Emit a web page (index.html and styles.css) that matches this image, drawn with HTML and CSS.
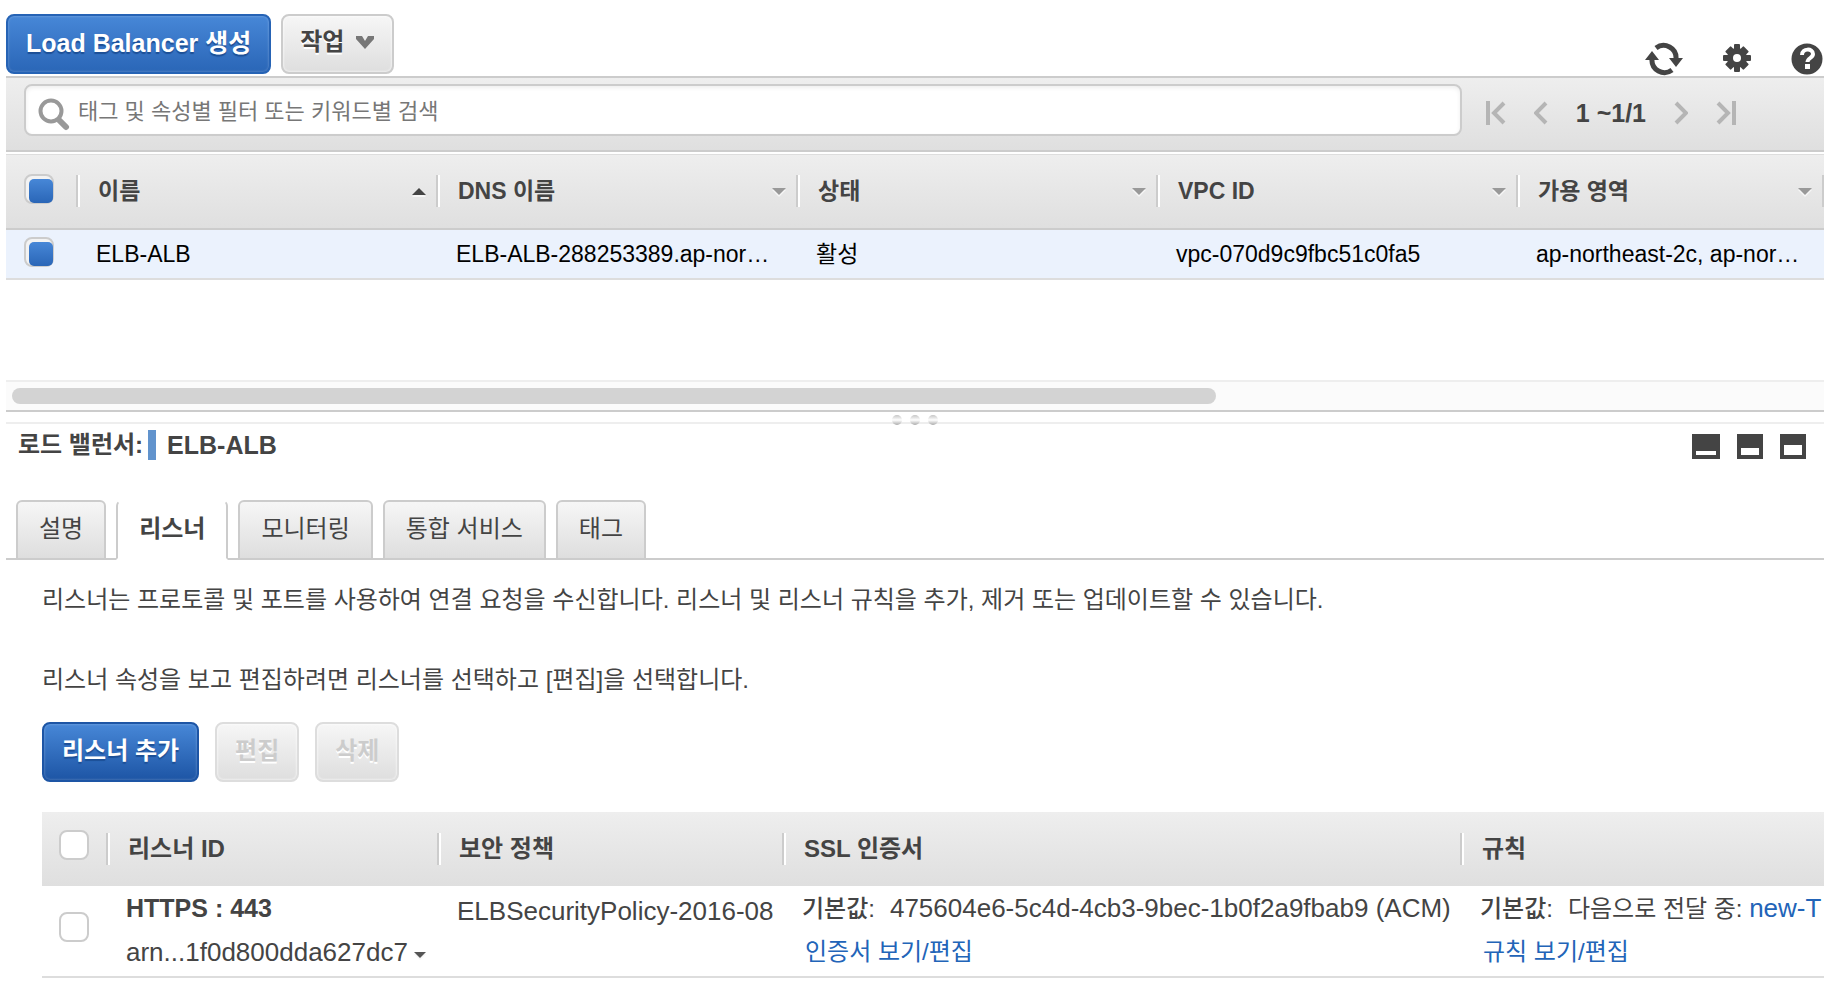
FILE: index.html
```html
<!DOCTYPE html>
<html lang="ko">
<head>
    <meta charset="UTF-8">
    <meta name="viewport" content="width=device-width, initial-scale=1.0">
    <title>Load Balancer</title>
    <link rel="stylesheet" href="styles.css">
</head>
<body>

    <header class="actions">
        <button class="btn btn-primary">Load Balancer 생성</button>
        <button class="btn btn-menu">작업
            <svg width="18" height="14" viewBox="0 0 18 14"><path d="M0 1h6l3 5 3-5h6v3L9 14 0 4z" fill="#777"/></svg>
        </button>
        <div class="tools">
            <button class="icon-btn" aria-label="새로 고침">
                <svg width="38" height="34" viewBox="0 0 38 34">
                    <g fill="none" stroke="#444" stroke-width="5">
                        <path d="M11 6A12.500 12.500 0 0 1 31 17"/>
                        <path d="M27 28A12.500 12.500 0 0 1 7 17"/>
                    </g>
                    <path d="M24 16h14l-7 9zM0 18h14L7 9z" fill="#444"/>
                </svg>
            </button>
            <button class="icon-btn" aria-label="설정">
                <svg width="28" height="34" viewBox="0 0 28 34">
                    <g fill="#444">
                        <rect x="11" y="2" width="6" height="28" rx="1"/>
                        <rect x="0" y="13" width="28" height="6" rx="1"/>
                        <rect x="10" y="3" width="8" height="26" rx="1" transform="rotate(45 14 16)"/>
                        <rect x="10" y="3" width="8" height="26" rx="1" transform="rotate(-45 14 16)"/>
                        <circle cx="14" cy="16" r="10"/>
                    </g>
                    <circle cx="14" cy="16" r="4" fill="#fff"/>
                </svg>
            </button>
            <button class="icon-btn" aria-label="도움말">
                <svg width="32" height="34" viewBox="0 0 32 34">
                    <circle cx="16" cy="17" r="15.500" fill="#444"/>
                    <path d="M11 13c0-7 11-7 11-1 0 4-5.500 4-5.500 8" fill="none" stroke="#fff" stroke-width="4"/>
                    <rect x="14" y="22" width="5" height="5" fill="#fff"/>
                </svg>
            </button>
        </div>
    </header>

    <section class="filter">
        <div class="search">
            <svg width="32" height="34" viewBox="0 0 32 34">
                <path d="M21 23l7 7" stroke="#999" stroke-width="6" stroke-linecap="round"/>
                <circle cx="13" cy="14" r="10.500" fill="none" stroke="#999" stroke-width="4"/>
            </svg>
            <input type="text" class="search-input" aria-label="검색" placeholder="태그 및 속성별 필터 또는 키워드별 검색">
        </div>
        <nav class="pager">
            <button class="icon-btn" aria-label="처음"><svg width="20" height="24" viewBox="0 0 20 24"><path d="M2 0v24M18 2L8 12l10 10" /></svg></button>
            <button class="icon-btn" aria-label="이전"><svg width="14" height="24" viewBox="0 0 14 24"><path d="M12 2L2 12l10 10"/></svg></button>
            <span class="pager-text">1 ~1/1</span>
            <button class="icon-btn" aria-label="다음"><svg width="14" height="24" viewBox="0 0 14 24"><path d="M2 2l10 10L2 22"/></svg></button>
            <button class="icon-btn" aria-label="마지막"><svg width="20" height="24" viewBox="0 0 20 24"><path d="M2 2l10 10L2 22M18 0v24"/></svg></button>
        </nav>
    </section>

    <div class="balancers">
        <table class="grid">
            <colgroup>
                <col class="col-check"><col class="col-wide"><col class="col-wide"><col class="col-wide"><col class="col-wide"><col>
            </colgroup>
            <thead>
                <tr>
                    <th><input type="checkbox" class="check" aria-label="모두 선택" checked></th>
                    <th><div class="head">이름 <i class="arrow arrow-up"></i></div></th>
                    <th><div class="head">DNS 이름 <i class="arrow"></i></div></th>
                    <th><div class="head">상태 <i class="arrow"></i></div></th>
                    <th><div class="head">VPC ID <i class="arrow"></i></div></th>
                    <th><div class="head head-last">가용 영역 <i class="arrow"></i></div></th>
                </tr>
            </thead>
            <tbody>
                <tr>
                    <td><input type="checkbox" class="check" aria-label="ELB-ALB" checked></td>
                    <td>ELB-ALB</td>
                    <td>ELB-ALB-288253389.ap-nor…</td>
                    <td>활성</td>
                    <td>vpc-070d9c9fbc51c0fa5</td>
                    <td>ap-northeast-2c, ap-nor…</td>
                </tr>
            </tbody>
        </table>
    </div>

    <div class="scrollbar"><div class="thumb"></div></div>
    <div class="splitter"><i></i><i></i><i></i></div>

    <section class="detail-head">
        <h2 class="detail-title">로드 밸런서:<span class="mark"></span><span class="detail-name">ELB-ALB</span></h2>
        <div class="panes">
            <button class="icon-btn" aria-label="최소화"><svg width="28" height="25" viewBox="0 0 28 25"><path d="M0 0h28v25H0z" fill="#444"/><path d="M4 17h20v4H4z" fill="#fff"/></svg></button>
            <button class="icon-btn" aria-label="절반"><svg width="26" height="25" viewBox="0 0 26 25"><path d="M0 0h26v25H0z" fill="#444"/><path d="M4 14h18v7H4z" fill="#fff"/></svg></button>
            <button class="icon-btn" aria-label="최대화"><svg width="26" height="25" viewBox="0 0 26 25"><path d="M0 0h26v25H0z" fill="#444"/><path d="M4 11h18v10H4z" fill="#fff"/></svg></button>
        </div>
    </section>

    <nav class="tabs">
        <button class="tab">설명</button>
        <button class="tab active">리스너</button>
        <button class="tab">모니터링</button>
        <button class="tab">통합 서비스</button>
        <button class="tab">태그</button>
    </nav>

    <main class="listeners">
        <p>리스너는 프로토콜 및 포트를 사용하여 연결 요청을 수신합니다. 리스너 및 리스너 규칙을 추가, 제거 또는 업데이트할 수 있습니다.</p>
        <p>리스너 속성을 보고 편집하려면 리스너를 선택하고 [편집]을 선택합니다.</p>
        <div class="listener-actions">
            <button class="btn btn-primary btn-dark">리스너 추가</button>
            <button class="btn" disabled>편집</button>
            <button class="btn" disabled>삭제</button>
        </div>

        <div class="listener-table">
            <table class="grid">
                <colgroup>
                    <col class="col-lcheck"><col class="col-id"><col class="col-policy"><col class="col-cert"><col>
                </colgroup>
                <thead>
                    <tr>
                        <th><input type="checkbox" class="check" aria-label="모두 선택"></th>
                        <th><div class="head">리스너 ID</div></th>
                        <th><div class="head">보안 정책</div></th>
                        <th><div class="head">SSL 인증서</div></th>
                        <th><div class="head">규칙</div></th>
                    </tr>
                </thead>
                <tbody>
                    <tr>
                        <td><input type="checkbox" class="check" aria-label="HTTPS : 443"></td>
                        <td>
                            <div class="line protocol">HTTPS : 443</div>
                            <div class="line"><span class="value">arn...1f0d800dda627dc7</span><i class="arrow arrow-dark"></i></div>
                        </td>
                        <td class="policy"><span class="value">ELBSecurityPolicy-2016-08</span></td>
                        <td>
                            <div class="line"><span class="term">기본값:</span><span class="value">475604e6-5c4d-4cb3-9bec-1b0f2a9fbab9 (ACM)</span></div>
                            <div class="line line-link"><a href="#">인증서 보기/편집</a></div>
                        </td>
                        <td>
                            <div class="line"><span class="term">기본값:</span>다음으로 전달 중: <a href="#" class="value">new-T</a></div>
                            <div class="line line-link"><a href="#">규칙 보기/편집</a></div>
                        </td>
                    </tr>
                </tbody>
            </table>
        </div>
    </main>

</body>
</html>
```

FILE: styles.css
```css
* { box-sizing: border-box; }
body {
    margin: 14px 12px 0 6px;
    font-family: "Liberation Sans", "Noto Sans CJK KR", sans-serif;
    font-size: 24px; line-height: 32px;
    color: #444; background: #fff;
}
button, input { font-family: inherit; font-size: inherit; line-height: inherit; color: inherit; }
a { color: #2264b8; text-decoration: none; }
svg { display: block; }

/* buttons */
.btn {
    height: 60px; padding: 0 18px 2px;
    border: 2px solid #ccc; border-radius: 8px;
    background: linear-gradient(#f6f6f6, #dedede);
    box-shadow: inset 0 0 2px 1px rgba(255, 255, 255, 0.5);
    font-weight: bold; text-shadow: 0 2px 0 #fff;
    cursor: pointer;
}
.btn-primary {
    color: #fff; border-color: #2663b5;
    background: linear-gradient(#4787d7, #2a66b7);
    box-shadow: inset 0 0 2px 1px rgba(255, 255, 255, 0.15);
    text-shadow: 0 2px 1px #1c4f96;
}
.btn-dark { border-color: #1d55a5; background: linear-gradient(#4787d7, #1d55a5); }
.btn-menu { display: flex; align-items: center; gap: 12px; padding: 0 18px 4px 17px; }
.btn:disabled { color: #ccc; border-color: #ddd; cursor: default; }
.icon-btn { padding: 0; border: 0; background: none; cursor: pointer; }

/* top bar */
.actions { display: flex; gap: 10px; height: 62px; align-items: flex-start; }
.actions .btn-primary { font-size: 25px; }
.tools { display: flex; gap: 40px; margin-left: auto; padding-right: 1px; align-self: flex-end; }
.filter {
    display: flex; align-items: flex-start;
    height: 76px; padding: 6px 88px 0 18px;
    border-top: 2px solid #ccc; border-bottom: 2px solid #ccc;
    background: linear-gradient(#eee, #dfdfdf);
}
.search {
    display: flex; align-items: center; flex: 1;
    height: 52px; padding: 8px 12px 0; gap: 8px;
    border: 2px solid #ccc; border-radius: 8px;
    background: #fff; box-shadow: inset 0 2px 4px #eee;
}
.search-input { flex: 1; min-width: 0; margin-bottom: 4px; padding: 0; border: 0; outline: 0; background: none; font-size: 22px; }
.search-input::placeholder { color: #777; }
.pager { display: flex; align-items: center; height: 58px; padding-left: 24px; gap: 28px; }
.pager path { fill: none; stroke: #b5b5b5; stroke-width: 4; }
.pager-text { font-size: 25px; font-weight: bold; }

/* tables */
.grid { width: 100%; table-layout: fixed; border-collapse: collapse; }
.grid th, .grid td { padding: 0; text-align: left; white-space: nowrap; }
.grid thead tr { background: linear-gradient(#eee, #dfdfdf); }
.head {
    display: flex; align-items: center; justify-content: space-between;
    height: 32px; padding: 0 10px 0 20px;
    border-left: 2px solid #ccc; box-shadow: inset 2px 0 0 #fff;
}
.arrow {
    border: 7px solid transparent; border-top-color: #999; border-bottom: 0;
    filter: drop-shadow(0 2px 0 #f6f6f6);
}
.arrow-up { border-bottom: 7px solid #444; border-top: 0; }
.arrow-dark { display: inline-block; border-width: 6px 6px 0; border-top-color: #555; margin: 0 0 3px 6px; }
.check {
    appearance: none; display: block;
    width: 30px; height: 30px; margin: 0 0 4px 18px;
    border: 2px solid #ccc; border-radius: 8px; background: #fff;
}
.check:checked { background: #f3f3f3; padding: 3px 0 0 3px; }
.check:checked::before {
    content: ""; display: block; width: 24px; height: 24px;
    border-radius: 5px; background: linear-gradient(#4787d7, #2a66b7);
}

.balancers { height: 228px; padding-top: 2px; font-size: 23px; }
.balancers thead th { height: 74px; border-top: 1px solid #ddd; border-bottom: 2px solid #ccc; }
.balancers tbody td {
    height: 50px; padding-left: 20px; padding-right: 20px;
    overflow: hidden; text-overflow: ellipsis;
    color: #000; background: #ebf2fd; border-bottom: 2px solid #ddd;
}
.balancers tbody td:first-child { padding: 0; }
.col-check { width: 70px; }
.col-wide { width: 360px; }
.head-last { border-right: 2px solid #ccc; }

.scrollbar { height: 32px; padding: 6px; background: #fbfbfb; border-top: 2px solid #eee; border-bottom: 2px solid #ccc; }
.thumb { width: calc(100% * 2 / 3); height: 16px; border-radius: 8px; background: #d3d3d3; }
.splitter { display: flex; justify-content: center; gap: 8px; height: 12px; padding-top: 3px; border-bottom: 2px solid #eee; }
.splitter i { width: 10px; height: 10px; border-radius: 5px; background: linear-gradient(#c5c5c5, #fff 50%, #aaa); }

/* detail pane */
.detail-head { display: flex; align-items: flex-start; justify-content: space-between; padding: 6px 18px 0 12px; height: 76px; }
.detail-title { display: flex; align-items: center; margin: 0; font-size: 24px; line-height: 30px; }
.mark { width: 8px; height: 30px; margin: 0 11px 0 5px; background: #6193cd; }
.detail-name { font-size: 25px; }
.panes { display: flex; gap: 17px; padding-top: 4px; }

.tabs { display: flex; gap: 10px; padding-left: 10px; height: 60px; box-shadow: inset 0 -2px 0 #ccc; }
.tab {
    padding: 0 21px 2px;
    border: 2px solid #ccc; border-radius: 6px 6px 0 0;
    background: linear-gradient(#f6f6f6, #dedede);
}
.tab.active { font-weight: bold; background: #fff; border-top-color: #fff; border-bottom-color: #fff; }

.listeners { padding: 24px 0 0 36px; }
.listeners p { margin: 0 0 48px; }
.listener-actions { display: flex; gap: 16px; margin: -22px 0 30px; }
.listener-table { overflow: hidden; }
.listener-table thead th { height: 74px; }
.listener-table tbody td { height: 91px; padding: 0 0 2px 20px; vertical-align: middle; border-bottom: 2px solid #ddd; }
.listener-table tbody td:first-child { padding: 0; }
.listener-table tbody .policy { vertical-align: top; padding-top: 9px; }
.listener-table .check { margin: 0 0 8px 17px; }
.line { height: 44px; line-height: 44px; }
.line-link { padding-left: 3px; }
.protocol { font-size: 25px; font-weight: bold; }
.value { font-size: 26px; }
.term { font-weight: 500; margin-right: 15px; }
.col-lcheck { width: 64px; }
.col-id { width: 331px; }
.col-policy { width: 345px; }
.col-cert { width: 678px; }
```
